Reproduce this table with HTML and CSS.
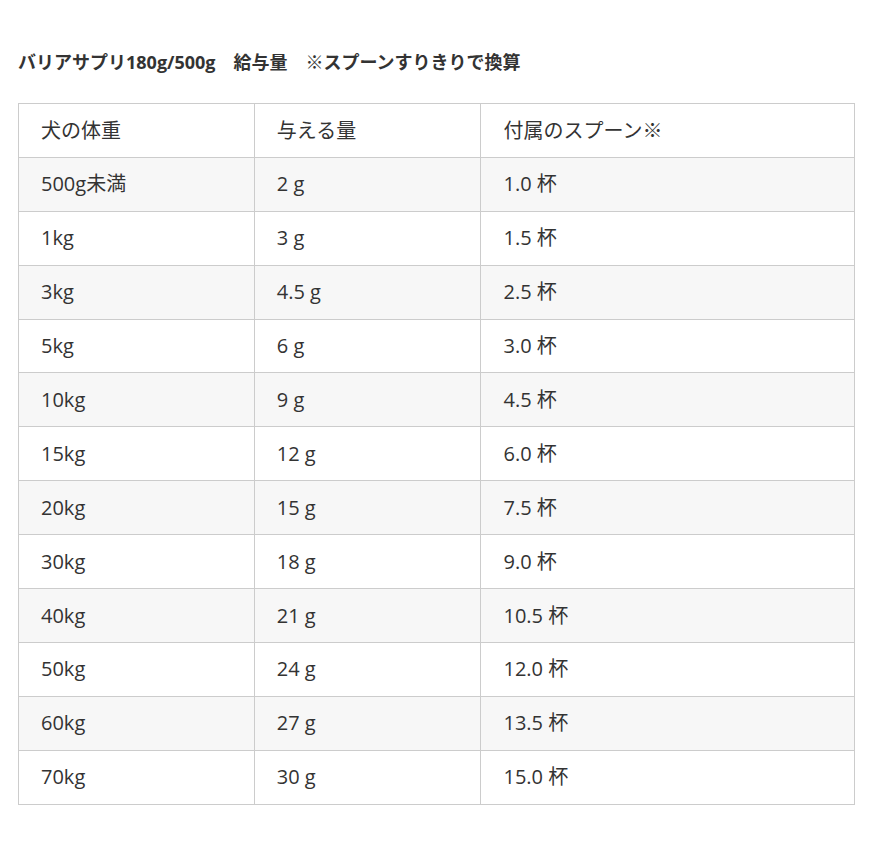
FILE: index.html
```html
<!DOCTYPE html>
<html lang="ja">
<head>
<meta charset="utf-8">
<link rel="stylesheet" href="styles.css">
</head>
<body>
<div class="page">
  <p class="title">バリアサプリ180g/500g　給与量　※スプーンすりきりで換算</p>
  <table class="feed">
    <colgroup><col class="c1"><col class="c2"><col class="c3"></colgroup>
    <tbody>
      <tr><td>犬の体重</td><td>与える量</td><td>付属のスプーン※</td></tr>
      <tr><td>500g未満</td><td>2 g</td><td>1.0 杯</td></tr>
      <tr><td>1kg</td><td>3 g</td><td>1.5 杯</td></tr>
      <tr><td>3kg</td><td>4.5 g</td><td>2.5 杯</td></tr>
      <tr><td>5kg</td><td>6 g</td><td>3.0 杯</td></tr>
      <tr><td>10kg</td><td>9 g</td><td>4.5 杯</td></tr>
      <tr><td>15kg</td><td>12 g</td><td>6.0 杯</td></tr>
      <tr><td>20kg</td><td>15 g</td><td>7.5 杯</td></tr>
      <tr><td>30kg</td><td>18 g</td><td>9.0 杯</td></tr>
      <tr><td>40kg</td><td>21 g</td><td>10.5 杯</td></tr>
      <tr><td>50kg</td><td>24 g</td><td>12.0 杯</td></tr>
      <tr><td>60kg</td><td>27 g</td><td>13.5 杯</td></tr>
      <tr><td>70kg</td><td>30 g</td><td>15.0 杯</td></tr>
    </tbody>
  </table>
</div>
</body>
</html>
```
FILE: styles.css
```css
html, body { margin: 0; padding: 0; background: #fff; }
body {
  font-family: "Open Sans", "Noto Sans CJK JP", sans-serif;
  color: #333;
}
.page { padding: 50px 14px 0 18px; }
.title {
  margin: 0 0 29px;
  font-size: 18px;
  font-weight: 700;
  line-height: 24px;
}
.feed {
  width: 837px;
  border-collapse: collapse;
  font-size: 20px;
}
.c1 { width: 236px; }
.c2 { width: 227px; }
.c3 { width: 374px; }
.feed td {
  border: 1px solid #ccc;
  padding: 13.5px 21px 13.4px 22px;
  line-height: 26px;
  height: 26px;
  vertical-align: middle;
}
.feed tr:nth-child(even) td { background: #f7f7f7; }
```
